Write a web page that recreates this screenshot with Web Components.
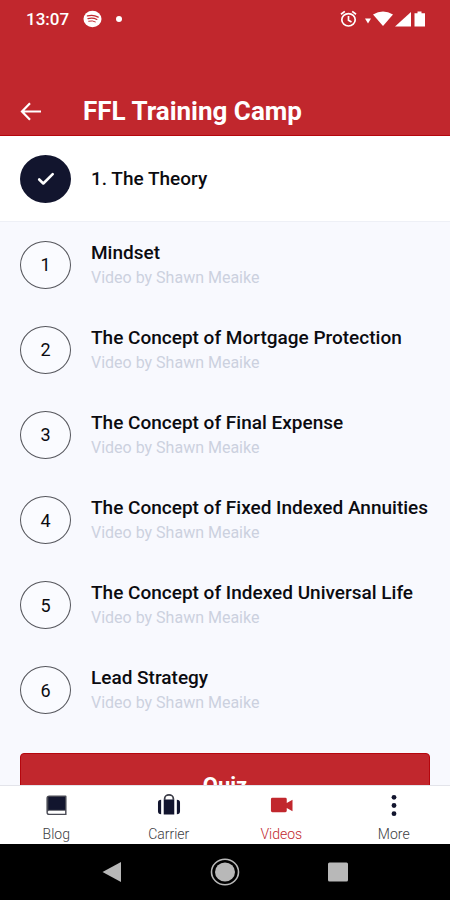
<!DOCTYPE html>
<html lang="en">
<head>
<meta charset="utf-8">
<meta name="viewport" content="width=device-width, initial-scale=1">
<title>FFL Training Camp</title>
<style>
  :root {
    --red: #c1272d;
    --red-edge: #b5060d;
    --navy: #12152e;
    --ink: #0b0b10;
    --muted: #ccd1df;
    --surface: #f8f9fe;
  }
  html, body { height: 100%; }
  body { margin: 0; font-family: Roboto, "Liberation Sans", sans-serif; color: var(--ink); }
</style>
</head>
<body>
<training-app>
  <status-bar slot="top" time="13:07"></status-bar>
  <title-bar slot="top">FFL Training Camp</title-bar>
  <section-head>1. The Theory</section-head>
  <lesson-list>
    <lesson-item number="1">Mindset<span slot="by">Video by Shawn Meaike</span></lesson-item>
    <lesson-item number="2">The Concept of Mortgage Protection<span slot="by">Video by Shawn Meaike</span></lesson-item>
    <lesson-item number="3">The Concept of Final Expense<span slot="by">Video by Shawn Meaike</span></lesson-item>
    <lesson-item number="4">The Concept of Fixed Indexed Annuities<span slot="by">Video by Shawn Meaike</span></lesson-item>
    <lesson-item number="5">The Concept of Indexed Universal Life<span slot="by">Video by Shawn Meaike</span></lesson-item>
    <lesson-item number="6">Lead Strategy<span slot="by">Video by Shawn Meaike</span></lesson-item>
  </lesson-list>
  <quiz-button>Quiz</quiz-button>
  <tab-bar slot="bottom">
    <tab-link icon="book">Blog</tab-link>
    <tab-link icon="case">Carrier</tab-link>
    <tab-link icon="video" active>Videos</tab-link>
    <tab-link icon="more">More</tab-link>
  </tab-bar>
  <system-nav slot="bottom"></system-nav>
</training-app>

<script>
  const define = (name, render) => customElements.define(name, class extends HTMLElement {
    constructor() {
      super();
      this.attachShadow({ mode: 'open' }).innerHTML = render(this);
    }
  });

  define('training-app', () => `
    <style>
      :host { display: flex; flex-direction: column; height: 100vh; background: var(--surface); }
      header { background: var(--red); border-bottom: 1px solid var(--red-edge); }
      main { flex: 1; min-height: 0; overflow-y: auto; scrollbar-width: none; }
    </style>
    <header><slot name="top"></slot></header>
    <main><slot></slot></main>
    <footer><slot name="bottom"></slot></footer>`);

  define('status-bar', el => `
    <style>
      :host { display: flex; justify-content: space-between; align-items: center; height: 38px; padding: 0 24px 0 26px; color: #fff; font-size: 17px; font-weight: 500; }
      div { display: flex; align-items: center; }
      .left { gap: 14px; }
      .dot { width: 6px; height: 6px; border-radius: 50%; background: #fff; }
      svg { display: block; }
    </style>
    <div class="left">
      <span>${el.getAttribute('time')}</span>
      <svg width="19" height="18" viewBox="0 0 20 18" aria-hidden="true">
        <ellipse cx="10" cy="9" rx="9.500" ry="8.700" fill="#fff"/>
        <g fill="none" stroke="#c1272d" stroke-linecap="round"><path d="M4.600 5.800Q10.600 4 16 7" stroke-width="1.300"/><path d="M5.200 8.600Q10.400 7.200 14.600 9.500" stroke-width="1.200"/><path d="M6 11.300Q10 10.300 13 12" stroke-width="1"/></g>
      </svg>
      <span class="dot"></span>
    </div>
    <div>
      <svg width="86" height="18" viewBox="0 0 86 18" fill="#fff" aria-hidden="true">
        <g fill="none" stroke="#fff" stroke-width="1.700"><ellipse cx="8.500" cy="9.800" rx="6.700" ry="6.200"/><path d="M8.500 6v4.200l3 1.700M1 4.300 4.800 1.400M16 4.300 12.200 1.400"/></g>
        <path d="M25 8.500h6l-3 5z"/>
        <path d="M33 4.500Q43 -1.500 53 4.500L43 16z"/>
        <path d="M71 2v14.500H55z"/>
        <path d="M77.500 1.500h4v1.800h3.500v13.200h-10.500V3.300h3z"/>
      </svg>
    </div>`);

  define('title-bar', () => `
    <style>
      :host { display: flex; align-items: center; gap: 41px; padding: 49px 20px 0; min-height: 48px; color: #fff; }
      button { display: block; padding: 0; border: 0; background: none; color: inherit; }
      svg { display: block; }
      h1 { margin: 0; font-size: 26px; line-height: 48px; font-weight: 700; }
    </style>
    <button type="button" aria-label="Back">
      <svg width="22" height="20" viewBox="0 0 22 20" fill="none" stroke="#fff" stroke-width="2.200"><path d="M21 10.500H2M10 2.300 2 10.500l8 8.200"/></svg>
    </button>
    <h1><slot></slot></h1>`);

  define('section-head', () => `
    <style>
      :host { display: flex; align-items: center; gap: 20px; min-height: 85px; padding: 0 20px; background: #fff; border-bottom: 1px solid #eef0f6; }
      .badge { display: grid; place-items: center; width: 51px; height: 48px; border-radius: 50%; background: var(--navy); }
      h2 { margin: 0; font-size: 19px; line-height: 24px; font-weight: 500; }
    </style>
    <span class="badge"><svg width="18" height="14" viewBox="0 0 18 14" fill="none" stroke="#fff" stroke-width="2.600" stroke-linecap="round" stroke-linejoin="round" aria-hidden="true"><path d="M2.200 7.500 6.300 11.500 15.700 2.200"/></svg></span>
    <h2><slot></slot></h2>`);

  define('lesson-list', () => `
    <style>:host { display: grid; grid-auto-rows: 1fr; min-height: 511px; }</style>
    <slot></slot>`);

  define('lesson-item', el => `
    <style>
      :host { display: flex; align-items: center; gap: 20px; padding: 0 20px; }
      .badge { display: grid; place-items: center; flex: none; box-sizing: border-box; width: 51px; height: 48px; border: 1px solid #55565c; border-radius: 50%; font-size: 18px; background: #fafbff; }
      h3, p { margin: 0; font-weight: 500; font-size: 19px; line-height: 25px; }
      p { font-weight: 400; font-size: 16px; color: var(--muted); }
    </style>
    <span class="badge">${el.getAttribute('number')}</span>
    <div><h3><slot></slot></h3><p><slot name="by"></slot></p></div>`);

  define('quiz-button', () => `
    <style>
      :host { display: block; padding: 20px; }
      button { width: 100%; height: 66px; border: 1px solid var(--red-edge); border-radius: 4px; background: var(--red); color: #fff; font: 700 22px/24px Roboto, "Liberation Sans", sans-serif; }
    </style>
    <button type="button"><slot></slot></button>`);

  define('tab-bar', () => `
    <style>
      :host { display: block; background: #fff; border-top: 1px solid #e3e4ea; }
      nav { display: grid; grid-template-columns: repeat(4, 1fr); }
    </style>
    <nav aria-label="Main"><slot></slot></nav>`);

  const icons = {
    book: '<path d="M5 1.500h17a1 1 0 0 1 1 1V22H5a3 3 0 0 1-3-3V4.500a3 3 0 0 1 3-3z" fill="#4a4b55"/><path d="M4.500 17.500h17v3h-16a1.500 1.500 0 0 1-1-3z" fill="#fff"/><path d="M4 3h17.500v13.500H4z"/>',
    case: '<path d="M7.500 6V4.500a4.500 3.500 0 0 1 9 0V6" fill="none" stroke="#3a3b46" stroke-width="1.800"/><path d="M6.500 5.800h11V21.500h-11zM3.800 6v15Q.5 21 .5 18V9q0-3 3.300-3zM20.200 6v15q3.300 0 3.300-3V9q0-3-3.300-3z"/>',
    video: '<path d="M3 4h13.500a1.500 1.500 0 0 1 1.500 1.500V9.500L24 6v12L18 14.500v3a1.500 1.500 0 0 1-1.500 1.500H3A1.500 1.500 0 0 1 1.500 17.500v-12A1.500 1.500 0 0 1 3 4z"/>',
    more: '<circle cx="12" cy="3.500" r="2.500"/><circle cx="12" cy="12" r="2.500"/><circle cx="12" cy="20.500" r="2.500"/>'
  };

  define('tab-link', el => `
    <style>
      :host { display: block; }
      a { display: flex; flex-direction: column; align-items: center; gap: 8px; padding: 8px 0 1px; color: #3c3d42; font-size: 14px; line-height: 18px; font-weight: 300; text-decoration: none; }
      svg { fill: var(--navy); }
      :host([active]) a { color: #c1272d; }
      :host([active]) svg { fill: var(--red); }
    </style>
    <a href="#${el.getAttribute('icon')}" ${el.hasAttribute('active') ? 'aria-current="page"' : ''}>
      <svg width="24" height="23" viewBox="0 0 24 24" aria-hidden="true">${icons[el.getAttribute('icon')]}</svg>
      <span><slot></slot></span>
    </a>`);

  define('system-nav', () => `
    <style>
      :host { display: grid; grid-template-columns: repeat(3, 113px); justify-content: center; min-height: 56px; background: #000; }
      button { display: grid; place-items: center; padding: 0; border: 0; background: none; }
    </style>
    <button type="button" aria-label="Back"><svg width="20" height="22" viewBox="0 0 20 22" fill="#b8b8b8"><path d="M19 1v20L0.500 11z"/></svg></button>
    <button type="button" aria-label="Home"><svg width="30" height="28" viewBox="0 0 30 28"><ellipse cx="15" cy="14" rx="13.500" ry="12.700" fill="none" stroke="#b8b8b8" stroke-width="1.600"/><ellipse cx="15" cy="14" rx="10" ry="9.500" fill="#b8b8b8"/></svg></button>
    <button type="button" aria-label="Recent apps"><svg width="20" height="20" viewBox="0 0 20 20" fill="#b8b8b8"><rect y="0.500" width="20" height="19" rx="1.500"/></svg></button>`);
</script>
</body>
</html>
